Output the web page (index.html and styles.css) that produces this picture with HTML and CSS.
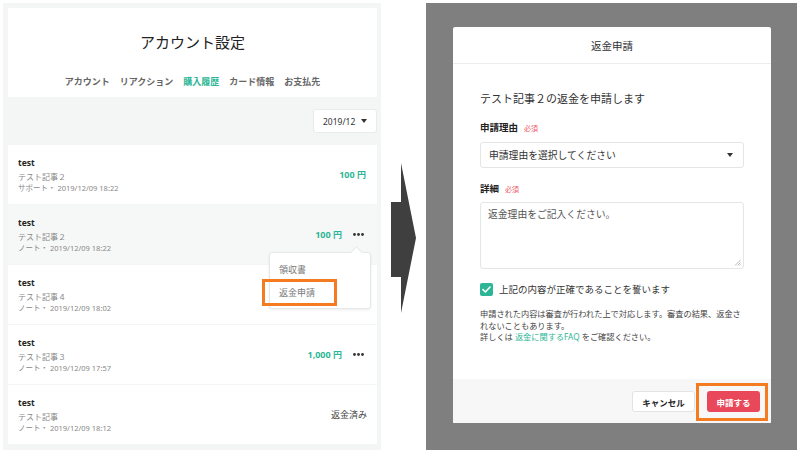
FILE: index.html
```html
<!DOCTYPE html>
<html lang="ja">
<head>
<meta charset="utf-8">
<title>返金申請</title>
<link rel="stylesheet" href="styles.css">
</head>
<body>
<div class="left">
  <div class="head-card">
    <h1 class="title">アカウント設定</h1>
    <nav class="tabs">
      <span class="tab">アカウント</span>
      <span class="tab">リアクション</span>
      <span class="tab active">購入履歴</span>
      <span class="tab">カード情報</span>
      <span class="tab">お支払先</span>
    </nav>
  </div>
  <div class="month"><span>2019/12</span><i class="caret"></i></div>
  <div class="list">
    <div class="row">
      <div class="info"><div class="name">test</div><div class="sub">テスト記事２</div><div class="meta">サポート・ 2019/12/09 18:22</div></div>
      <div class="price">100 円</div>
    </div>
    <div class="row hover">
      <div class="info"><div class="name">test</div><div class="sub">テスト記事２</div><div class="meta">ノート・ 2019/12/09 18:22</div></div>
      <div class="price">100 円</div>
      <span class="dots"><svg width="11" height="3" viewBox="0 0 11 3"><circle cx="1.5" cy="1.5" r="1.4"/><circle cx="5.5" cy="1.5" r="1.4"/><circle cx="9.5" cy="1.5" r="1.4"/></svg></span>
      <div class="menu">
        <div class="menu-item">領収書</div>
        <div class="menu-item">返金申請</div>
        <div class="mark mark-menu"></div>
      </div>
    </div>
    <div class="row">
      <div class="info"><div class="name">test</div><div class="sub">テスト記事４</div><div class="meta">ノート・ 2019/12/09 18:02</div></div>
    </div>
    <div class="row">
      <div class="info"><div class="name">test</div><div class="sub">テスト記事３</div><div class="meta">ノート・ 2019/12/09 17:57</div></div>
      <div class="price">1,000 円</div>
      <span class="dots"><svg width="11" height="3" viewBox="0 0 11 3"><circle cx="1.5" cy="1.5" r="1.4"/><circle cx="5.5" cy="1.5" r="1.4"/><circle cx="9.5" cy="1.5" r="1.4"/></svg></span>
    </div>
    <div class="row">
      <div class="info"><div class="name">test</div><div class="sub">テスト記事</div><div class="meta">ノート・ 2019/12/09 18:12</div></div>
      <div class="refunded">返金済み</div>
    </div>
  </div>
</div>
<svg class="arrow" width="45" height="447" viewBox="0 3 45 447"><polygon points="10,202 20,202 20,163 35,238 20,313 20,277 10,277" fill="#3f3f3f"/></svg>
<div class="right">
  <div class="modal">
    <div class="modal-head">返金申請</div>
    <div class="modal-body">
      <h2 class="lead">テスト記事２の返金を申請します</h2>
      <div class="label">申請理由<span class="req">必須</span></div>
      <div class="select"><span>申請理由を選択してください</span><i class="caret"></i></div>
      <div class="label label2">詳細<span class="req">必須</span></div>
      <div class="textarea"><span>返金理由をご記入ください。</span><svg class="grip" width="7" height="7" viewBox="0 0 7 7"><path d="M6.5 1 1 6.5M6.5 3.5 3.5 6.5M6.5 5.5 5.5 6.5" stroke="#aaa" stroke-width="0.8"/></svg></div>
      <div class="check-row">
        <span class="checkbox"><svg width="9" height="7" viewBox="0 0 9 7"><path d="M1 3.6 3.4 6 8 1" fill="none" stroke="#fff" stroke-width="1.6" stroke-linecap="round" stroke-linejoin="round"/></svg></span>
        <span class="check-text">上記の内容が正確であることを誓います</span>
      </div>
      <p class="notes">申請された内容は審査が行われた上で対応します。審査の結果、返金されないこともあります。<br>詳しくは <span class="link">返金に関するFAQ</span> をご確認ください。</p>
    </div>
    <div class="modal-foot">
      <span class="btn btn-cancel">キャンセル</span>
      <span class="btn btn-submit">申請する<span class="mark mark-btn"></span></span>
    </div>
  </div>
</div>
</body>
</html>
```
FILE: styles.css
```css
* { box-sizing: border-box; }
html, body { margin: 0; }
body {
  width: 800px;
  height: 454px;
  padding: 3px;
  display: flex;
  align-items: flex-start;
  background: #ffffff;
  font-family: "Noto Sans", "Noto Sans CJK JP", sans-serif;
  color: #222;
  overflow: hidden;
}

/* left panel */
.left {
  width: 378px;
  height: 447px;
  background: #f4f6f5;
  padding: 5px 4px 0 5px;
  display: flex;
  flex-direction: column;
}
.head-card {
  background: #fff;
  height: 89px;
  padding-top: 24px;
  text-align: center;
}
.title {
  margin: 0;
  font-size: 15px;
  line-height: 20px;
  font-weight: 400;
  color: #222;
}
.tabs {
  margin-top: 24px;
  display: flex;
  justify-content: center;
  gap: 10px;
  font-size: 9px;
  line-height: 12px;
  font-weight: 700;
  color: #666;
}
.tab.active { color: #2cb696; }
.month {
  align-self: flex-end;
  margin-top: 12px;
  width: 64px;
  height: 24px;
  background: #fff;
  border: 1px solid #e8ebea;
  border-radius: 3px;
  display: flex;
  align-items: center;
  padding-left: 9px;
  gap: 6px;
  font-size: 8.5px;
  color: #333;
}
.caret {
  display: inline-block;
  width: 0;
  height: 0;
  border-left: 3.5px solid transparent;
  border-right: 3.5px solid transparent;
  border-top: 4px solid #333;
}
.list {
  margin-top: 12px;
  display: flex;
  flex-direction: column;
  gap: 1px;
}
.row {
  position: relative;
  height: 59px;
  background: #fff;
  display: flex;
  align-items: center;
  padding: 0 13px 0 10px;
}
.row.hover { background: #f6f7f7; }
.info {
  flex: 1;
  align-self: flex-start;
  padding-top: 12px;
}
.name {
  font-size: 8.5px;
  line-height: 12px;
  font-weight: 700;
  color: #222;
}
.sub {
  margin-top: 2px;
  font-size: 8px;
  line-height: 12px;
  color: #888;
}
.meta {
  font-size: 7.5px;
  line-height: 11px;
  color: #888;
}
.price {
  font-size: 9px;
  font-weight: 700;
  color: #2cb696;
  margin-right: -2px;
}
.dots {
  margin-left: 13px;
  width: 11px;
  display: flex;
  fill: #333;
}
.refunded {
  font-size: 9px;
  color: #444;
  margin-right: -3px;
}
.menu {
  position: absolute;
  top: 47px;
  right: 6px;
  width: 102px;
  height: 57px;
  background: #fff;
  border: 1px solid #e6e8e8;
  border-radius: 3px;
  box-shadow: 0 1px 3px rgba(0,0,0,0.08);
  padding: 5px 0;
  z-index: 2;
}
.menu::before {
  content: "";
  position: absolute;
  top: -5px;
  right: 9px;
  width: 8px;
  height: 8px;
  background: #fff;
  border-left: 1px solid #e6e8e8;
  border-top: 1px solid #e6e8e8;
  transform: rotate(45deg);
}
.menu-item {
  font-size: 9px;
  line-height: 23px;
  padding-left: 9px;
  color: #777;
}
.mark {
  position: absolute;
  border: 3px solid #f47b20;
  pointer-events: none;
}
.mark-menu {
  left: -8px;
  top: 26px;
  width: 75px;
  height: 27px;
}

/* arrow */
.arrow { flex: none; display: block; }

/* right panel */
.right {
  width: 371px;
  height: 447px;
  background: #7f7f7f;
  padding: 24px 0 0 27px;
}
.modal {
  width: 318px;
  height: 396px;
  background: #fff;
  border-radius: 2px;
  display: flex;
  flex-direction: column;
  overflow: visible;
}
.modal-head {
  height: 37px;
  border-bottom: 1px solid #eceeed;
  display: flex;
  align-items: center;
  justify-content: center;
  font-size: 10.5px;
  color: #333;
}
.modal-body {
  flex: 1;
  padding: 28px 27px 0;
}
.lead {
  margin: 0;
  font-size: 11px;
  line-height: 14px;
  font-weight: 400;
  color: #333;
}
.label {
  margin-top: 15px;
  font-size: 9.5px;
  line-height: 14px;
  font-weight: 700;
  color: #222;
}
.label2 { margin-top: 14px; }
.req {
  margin-left: 6px;
  font-size: 7px;
  font-weight: 400;
  color: #ec5a68;
}
.select {
  margin-top: 6px;
  height: 26px;
  border: 1px solid #e3e6e5;
  border-radius: 3px;
  display: flex;
  align-items: center;
  justify-content: space-between;
  padding: 0 10px 0 8px;
  font-size: 9.8px;
  color: #333;
}
.textarea {
  position: relative;
  margin-top: 5px;
  height: 67px;
  border: 1px solid #e3e6e5;
  border-radius: 3px;
  padding: 5px 7px;
  font-size: 9.8px;
  line-height: 14px;
  color: #555;
}
.grip { position: absolute; right: 2px; bottom: 2px; }
.check-row {
  margin-top: 13px;
  display: flex;
  align-items: center;
  gap: 6px;
  height: 14px;
}
.checkbox {
  width: 13px;
  height: 13px;
  border-radius: 2px;
  background: #2cb696;
  display: flex;
  align-items: center;
  justify-content: center;
}
.check-text {
  font-size: 9.5px;
  color: #333;
}
.notes {
  margin: 12px 0 0;
  font-size: 8.2px;
  line-height: 11.7px;
  color: #444;
}
.link { color: #2cb696; }
.modal-foot {
  height: 44px;
  background: #f7f7f7;
  display: flex;
  justify-content: flex-end;
  align-items: flex-start;
  gap: 12px;
  padding: 12px 11px 0 0;
}
.btn {
  position: relative;
  height: 21px;
  border-radius: 3px;
  display: flex;
  align-items: center;
  justify-content: center;
  font-size: 8.5px;
  font-weight: 700;
}
.btn-cancel {
  width: 63px;
  background: #fff;
  border: 1px solid #e2e4e3;
  color: #222;
}
.btn-submit {
  width: 53px;
  background: #e8485a;
  color: #fff;
}
.mark-btn {
  left: -11px;
  top: -8px;
  width: 72px;
  height: 38px;
}
```
